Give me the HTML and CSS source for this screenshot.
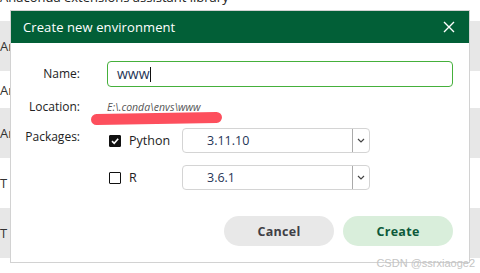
FILE: index.html
```html
<!DOCTYPE html>
<html lang="en">
<head>
  <meta charset="UTF-8" />
  <title>Create new environment</title>
  <link rel="stylesheet" href="styles.css">
</head>
<body>

  <div class="page">
    <div class="page-top">Anaconda extensions assistant library</div>
    <div class="row gray"><span>Ar</span></div>
    <div class="row short"><span>Ar</span></div>
    <div class="row gray"><span>Ar</span></div>
    <div class="row"><span>T</span></div>
    <div class="row gray"><span>T</span></div>
  </div>

  <div class="dialog">
    <div class="dialog-header">
      <span class="dialog-title">Create new environment</span>
      <svg class="close" width="12" height="12" viewBox="0 0 12 12">
        <path d="M1 1 L11 11 M11 1 L1 11" stroke="#fff" stroke-width="1.4" fill="none"/>
      </svg>
    </div>

    <div class="dialog-body">
      <label class="field-label">Name:</label>
      <div class="name-input">www<span class="caret"></span></div>

      <label class="field-label">Location:</label>
      <div class="location">E:\.conda\envs\www</div>

      <label class="field-label top">Packages:</label>
      <div class="packages">
        <div class="pkg">
          <span class="check on">
            <svg width="10" height="10" viewBox="0 0 10 10"><path d="M2 5.2 L4.2 7.3 L8.2 2.8" stroke="#fff" stroke-width="1.6" fill="none"/></svg>
          </span>
          <span class="pkg-name">Python</span>
          <div class="select">
            <span class="select-value">3.11.10</span>
            <span class="select-arrow"><svg width="8" height="5" viewBox="0 0 8 5"><path d="M1 1 L4 4 L7 1" stroke="#444" stroke-width="1.2" fill="none"/></svg></span>
          </div>
        </div>
        <div class="pkg">
          <span class="check"></span>
          <span class="pkg-name">R</span>
          <div class="select">
            <span class="select-value">3.6.1</span>
            <span class="select-arrow"><svg width="8" height="5" viewBox="0 0 8 5"><path d="M1 1 L4 4 L7 1" stroke="#444" stroke-width="1.2" fill="none"/></svg></span>
          </div>
        </div>
      </div>
    </div>

    <div class="dialog-actions">
      <button class="btn cancel">Cancel</button>
      <button class="btn create">Create</button>
    </div>

    <div class="marker"></div>
  </div>

  <div class="watermark">CSDN @ssrxiaoge2</div>

</body>
</html>
```

FILE: styles.css
```css
body {
  margin: 0;
  width: 480px;
  height: 273px;
  overflow: hidden;
  position: relative;
  font-family: 'Open Sans', 'Noto Sans', sans-serif;
  background: #fff;
  color: #222;
}

.page {
  overflow: hidden;
}

.page-top {
  height: 26px;
  margin-top: -5px;
  font-size: 13px;
  line-height: 4px;
  color: #222;
}

.row {
  height: 50px;
  display: flex;
  align-items: center;
  font-size: 13px;
  color: #333;
}

.row.short {
  height: 37px;
}

.row.gray {
  background: #e7e7e7;
}

.dialog {
  position: absolute;
  left: 10px;
  top: 10px;
  width: 458px;
  height: 251px;
  border: 1px solid #d2d2d2;
  background: #fff;
  display: flex;
  flex-direction: column;
}

.dialog-header {
  height: 32px;
  background: #025f37;
  color: #fff;
  display: flex;
  align-items: center;
  justify-content: space-between;
  padding: 0 14px 0 12px;
}

.dialog-title {
  font-size: 13px;
  letter-spacing: 0.1px;
}

.dialog-body {
  display: grid;
  grid-template-columns: 69px 1fr;
  column-gap: 27px;
  row-gap: 7px;
  padding: 18px 16px 0 0;
}

.field-label {
  font-size: 12px;
  text-align: right;
  height: 26px;
  line-height: 26px;
  color: #222;
}

.field-label.top {
  line-height: 17px;
}

.name-input {
  height: 24px;
  border: 1px solid #45b03b;
  border-radius: 4px;
  padding-left: 9px;
  font-size: 14px;
  line-height: 24px;
  color: #1f3556;
  display: flex;
  align-items: center;
}

.caret {
  display: inline-block;
  width: 1px;
  height: 15px;
  background: #111;
}

.location {
  font-size: 10.5px;
  font-style: italic;
  color: #555;
  line-height: 27px;
}

.packages {
  display: flex;
  flex-direction: column;
  gap: 12px;
}

.pkg {
  display: flex;
  align-items: center;
  height: 25px;
}

.check {
  width: 10px;
  height: 10px;
  border: 1.5px solid #111;
  border-radius: 1px;
  margin-left: 2px;
  display: flex;
  align-items: center;
  justify-content: center;
}

.check.on {
  background: #111;
}

.pkg-name {
  font-size: 12.5px;
  width: 53px;
  margin-left: 8px;
  color: #222;
}

.select {
  width: 186px;
  height: 23px;
  border: 1px solid #d4d4d4;
  border-radius: 4px;
  display: flex;
  align-items: center;
}

.select-value {
  flex: 1;
  padding-left: 24px;
  font-size: 12.5px;
  color: #1f3556;
}

.select-arrow {
  width: 16px;
  height: 100%;
  border-left: 1px solid #aaa;
  display: flex;
  align-items: center;
  justify-content: center;
}

.dialog-actions {
  display: flex;
  justify-content: flex-end;
  gap: 9px;
  padding: 26px 16px 0 0;
}

.btn {
  width: 110px;
  height: 30px;
  border: none;
  border-radius: 15px;
  font-family: 'Open Sans', 'Noto Sans', sans-serif;
  font-size: 12.5px;
  font-weight: bold;
  letter-spacing: 0.3px;
}

.btn.cancel {
  background: #e8e8e8;
  color: #3f3f46;
}

.btn.create {
  background: #d9eedb;
  color: #0d5a3a;
}

.marker {
  position: absolute;
  left: 80px;
  top: 102px;
  width: 131px;
  height: 11px;
  border-radius: 6px;
  background: #fd4f5d;
  transform: rotate(-1deg);
}

.watermark {
  position: absolute;
  right: 5px;
  bottom: 4px;
  font-family: 'Liberation Sans', sans-serif;
  font-size: 11px;
  color: #c4c4c4;
}
```
